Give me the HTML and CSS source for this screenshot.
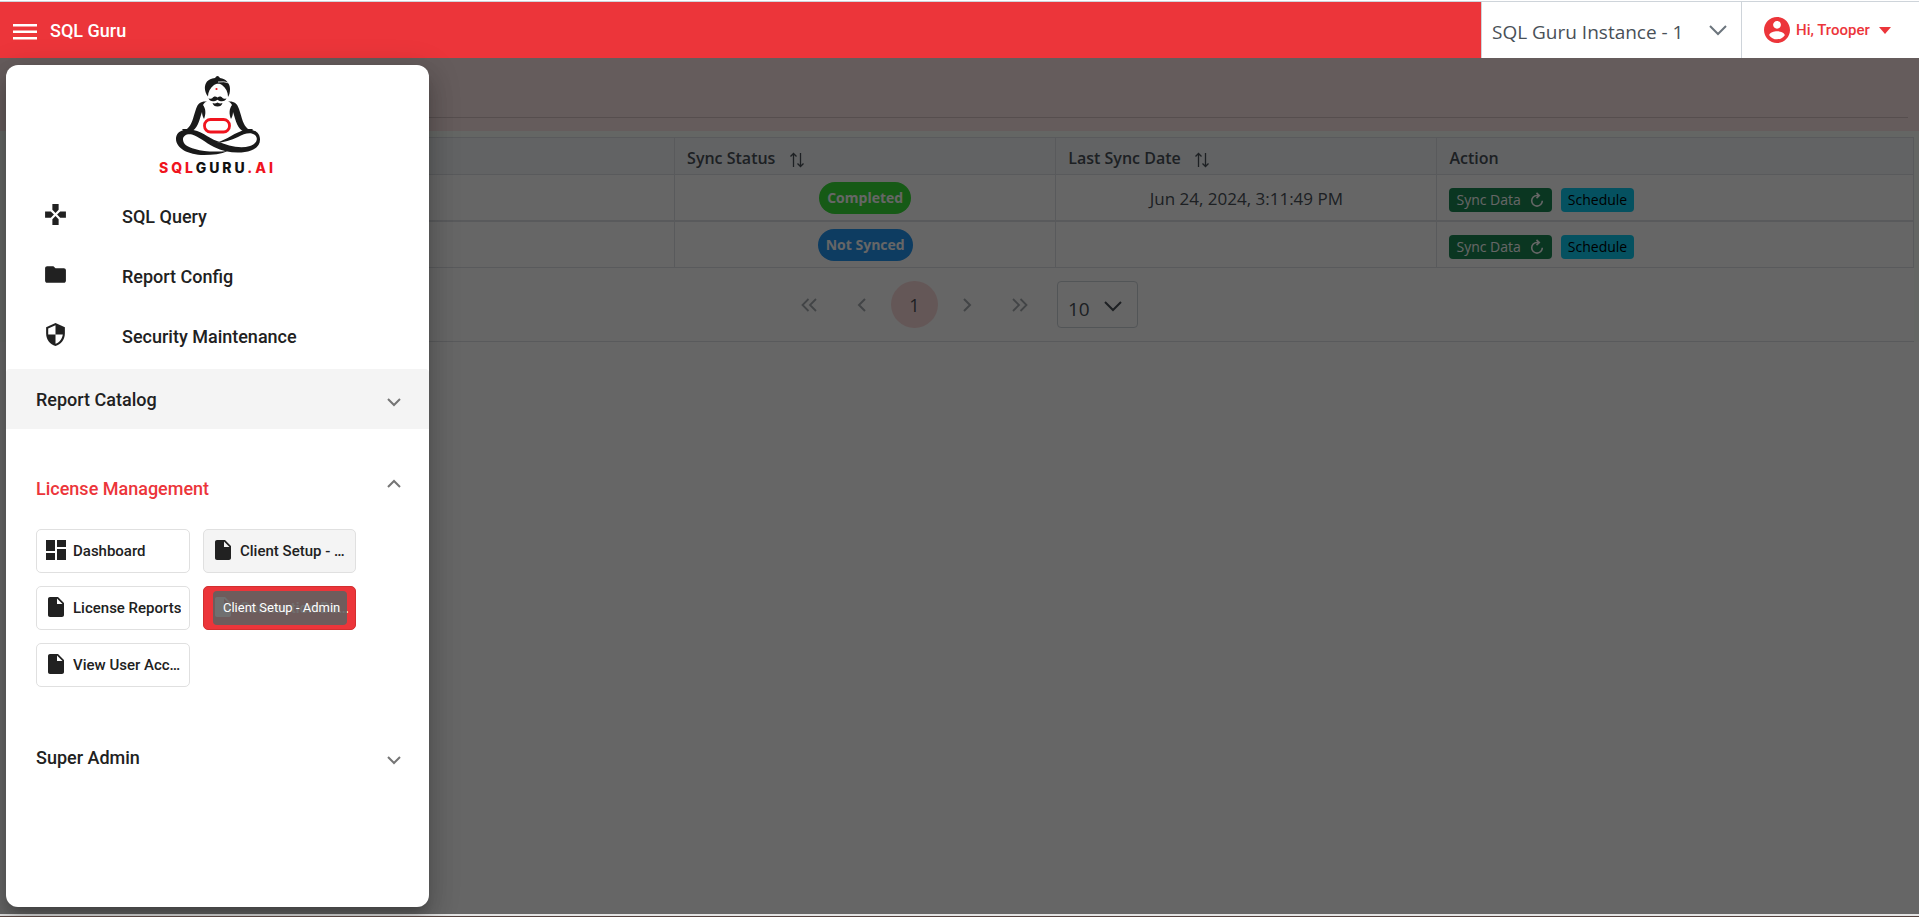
FILE: index.html
```html
<!DOCTYPE html>
<html lang="en">
<head>
  <meta charset="utf-8">
  <meta name="viewport" content="width=device-width, initial-scale=1">
  <title>SQL Guru</title>
  <link rel="stylesheet" href="styles.css">
</head>
<body>
  <!-- icons shared by several items -->
  <svg class="sprite" aria-hidden="true">
    <symbol id="i-file" viewBox="0 0 24 24"><path d="M6 2c-1.100 0-1.990.9-1.990 2L4 20c0 1.100.89 2 1.990 2H18c1.100 0 2-.9 2-2V8l-6-6H6zm7 7V3.500L18.500 9H13z"/></symbol>
    <symbol id="i-down" viewBox="0 0 14 14"><path d="M1 4l6 6 6-6" fill="none" stroke="currentColor" stroke-width="2"/></symbol>
    <symbol id="i-sort" viewBox="0 0 16 16"><path d="M4.500 15V1.500M1.500 4.500l3-3 3 3M11.500 1v13.500M8.500 11.500l3 3 3-3" fill="none" stroke="currentColor" stroke-width="1.300"/></symbol>
    <symbol id="i-sync" viewBox="0 0 16 16"><path d="M9.500 3.500H8a5.300 5.300 0 1 0 5.300 5.300M7.500.8l2.800 2.700-2.800 2.700" fill="none" stroke="currentColor" stroke-width="1.600"/></symbol>
    <symbol id="i-left" viewBox="0 0 16 16"><path d="M11 2L5 8l6 6" fill="none" stroke="currentColor" stroke-width="2"/></symbol>
    <symbol id="i-left2" viewBox="0 0 16 16"><path d="M7.500 2l-6 6 6 6M15 2L9 8l6 6" fill="none" stroke="currentColor" stroke-width="1.800"/></symbol>
  </svg>

  <header class="topbar">
    <button class="menu-btn" type="button" aria-label="Menu">
      <svg viewBox="0 0 24 16"><path d="M0 0h24v2.600H0zM0 6.500h24v2.600H0zM0 13h24v2.600H0z"/></svg>
    </button>
    <span class="brand">SQL Guru</span>
    <div class="instance">
      <select aria-label="Instance">
        <option>SQL Guru Instance - 1</option>
      </select>
      <svg viewBox="0 0 18 18"><path d="M1 5l8 8 8-8" fill="none" stroke="currentColor" stroke-width="2"/></svg>
    </div>
    <button class="user" type="button">
      <svg class="user-icon" viewBox="2 2 20 20"><path d="M12 2C6.480 2 2 6.480 2 12s4.480 10 10 10 10-4.480 10-10S17.520 2 12 2zm0 3c1.660 0 3 1.340 3 3s-1.340 3-3 3-3-1.340-3-3 1.340-3 3-3zm0 14.200c-2.500 0-4.710-1.280-6-3.220.03-1.990 4-3.080 6-3.080 1.990 0 5.970 1.090 6 3.080-1.290 1.940-3.500 3.220-6 3.220z"/></svg>
      <span>Hi, Trooper</span>
      <svg class="caret" viewBox="0 0 12 7"><path d="M0 0h12L6 7z"/></svg>
    </button>
  </header>

  <div class="stage">
    <main class="page">
      <div class="page-head"><hr></div>
      <div class="table-wrap">
        <table class="grid">
          <thead>
            <tr>
              <th class="col-name"></th>
              <th class="col-status">Sync Status <svg class="sort"><use href="#i-sort"/></svg></th>
              <th class="col-date">Last Sync Date <svg class="sort"><use href="#i-sort"/></svg></th>
              <th>Action</th>
            </tr>
          </thead>
          <tbody>
            <tr>
              <td></td>
              <td class="center"><span class="badge done">Completed</span></td>
              <td class="center date">Jun 24, 2024, 3:11:49 PM</td>
              <td>
                <div class="actions">
                  <button class="btn btn-sync" type="button">Sync Data <svg><use href="#i-sync"/></svg></button>
                  <button class="btn btn-plan" type="button">Schedule</button>
                </div>
              </td>
            </tr>
            <tr>
              <td></td>
              <td class="center"><span class="badge pending">Not Synced</span></td>
              <td class="center date"></td>
              <td>
                <div class="actions">
                  <button class="btn btn-sync" type="button">Sync Data <svg><use href="#i-sync"/></svg></button>
                  <button class="btn btn-plan" type="button">Schedule</button>
                </div>
              </td>
            </tr>
          </tbody>
        </table>
        <nav class="pager" aria-label="Pages">
          <button type="button" aria-label="First page"><svg><use href="#i-left2"/></svg></button>
          <button type="button" aria-label="Previous page"><svg><use href="#i-left"/></svg></button>
          <button type="button" class="current">1</button>
          <button type="button" class="flip" aria-label="Next page"><svg><use href="#i-left"/></svg></button>
          <button type="button" class="flip" aria-label="Last page"><svg><use href="#i-left2"/></svg></button>
          <div class="page-size">
            <select aria-label="Rows per page">
              <option>10</option>
            </select>
            <svg viewBox="0 0 18 18"><path d="M1 5l8 8 8-8" fill="none" stroke="currentColor" stroke-width="2"/></svg>
          </div>
        </nav>
      </div>
    </main>

    <div class="backdrop"></div>

    <aside class="drawer">
      <div class="logo">
        <svg viewBox="0 0 84 80" role="img" aria-label="SQLGuru.ai">
          <path fill="#1a1a1a" d="M39 3q2.500-4 5 0c6 1 10 5 10 11 0 3-.5 6-2 8 0-5-2-9-6-12-2-1.500-5-2-8 0-4 3-6 7-6 11.500-4-5-4-11-1-15 2-2 4-3 8-3.500z"/>
          <path stroke="#fff" stroke-width=".8" fill="none" d="M42 7q6-1 11 1"/>
          <circle cx="40.500" cy="14" r="1.100" fill="#f0141e"/>
          <path fill="#1a1a1a" d="M41.500 22.500c2-1.500 4-1 5 .5 1 1 2.500 1 4 .2-1 3-5 4.200-9 1.500-4.200 2.700-8 1.500-9-1.500 1.500.8 3 .8 4-.2 1-1.500 3-2 5-.5zM36.500 28q2.500 1 5-.5 2.500 1.500 5 .5-1 3.500-5 3.500t-5-3.500z"/>
          <path fill="#1a1a1a" d="M31 26.500c-6-.5-9 1.500-11 7.500-3 9-4 16-9 20l-5 0c2 3 5 4 8 3 8-3 9-11 12-20 0 3 1 5 2 7 2-5 2-10-1-14 1-2 2-3 4-3.500zM52 26.500c6-.5 9 1.500 11 7.500 3 9 4 16 9 20l5 0c-2 3-5 4-8 3-8-3-9-11-12-20 0 3-1 5-2 7-2-5-2-10 1-14-1-2-2-3-4-3.500z"/>
          <path fill="#1a1a1a" d="M8 55c-5 1-8 4-8 9 0 9 12 16 28 16 9 0 17-1 24-4-12 1-24 1-33-2-8-2-12-5-12-9.500 0-4 4-6 9-5 7 2 13 8 22 12.500 12 6 27 7 37 3.500 6-2 9-6 9-11s-3-8.500-8-9.500c-12-2-20 7-32 11.500l-4 1c8 0 15-2 22-5.500 6-3 12-5.500 17-2 4 4 1 9-5 11-10 3-22 0-33-5C31 63 23 52 8 55z"/>
          <rect x="28.500" y="44.500" width="25" height="12.500" rx="6" fill="none" stroke="#f0141e" stroke-width="2.800"/>
        </svg>
        <p class="logo-text"><span>SQL</span>GURU<span>.AI</span></p>
      </div>

      <nav class="links">
        <a href="#"><svg viewBox="0 0 24 24"><path d="M15 7.500V2H9v5.500l3 3 3-3zM7.500 9H2v6h5.500l3-3-3-3zM9 16.500V22h6v-5.500l-3-3-3 3zM16.500 9l-3 3 3 3H22V9h-5.500z"/></svg>SQL Query</a>
        <a href="#"><svg viewBox="0 0 24 24"><path d="M10 4H4c-1.100 0-1.990.9-1.990 2L2 18c0 1.100.9 2 2 2h16c1.100 0 2-.9 2-2V8c0-1.100-.9-2-2-2h-8l-2-2z"/></svg>Report Config</a>
        <a href="#"><svg viewBox="0 0 24 24"><path d="M12 1L3 5v6c0 5.550 3.840 10.740 9 12 5.160-1.260 9-6.450 9-12V5l-9-4zm0 10.990h7c-.53 4.120-3.280 7.790-7 8.940V12H5V6.300l7-3.110v8.800z"/></svg>Security Maintenance</a>
      </nav>

      <button class="section shaded" type="button">Report Catalog <svg><use href="#i-down"/></svg></button>

      <button class="section open" type="button">License Management <svg><use href="#i-down"/></svg></button>
      <div class="tiles">
        <a href="#" class="tile"><svg viewBox="0 0 24 24"><path d="M2 2h9v11H2zM2 15h9v7H2zM13 11h9v11h-9zM13 2h9v7h-9z"/></svg><span>Dashboard</span></a>
        <a href="#" class="tile hovered"><svg><use href="#i-file"/></svg><span>Client Setup - Admin</span></a>
        <a href="#" class="tile"><svg><use href="#i-file"/></svg><span>License Reports</span></a>
        <a href="#" class="tile active"><svg><use href="#i-file"/></svg><span>Connection Database</span><em class="tip" role="tooltip">Client Setup - Admin</em></a>
        <a href="#" class="tile"><svg><use href="#i-file"/></svg><span>View User Account</span></a>
      </div>

      <button class="section last" type="button">Super Admin <svg><use href="#i-down"/></svg></button>
    </aside>
  </div>
</body>
</html>
```

FILE: styles.css
```css
* {
  box-sizing: border-box;
}

body {
  margin: 0;
  height: 100vh;
  display: flex;
  flex-direction: column;
  font-family: Roboto, sans-serif;
  font-size: 18px;
  color: #212121;
  background: #fff;
  border-bottom: 1px solid #54433f;
}

button, select {
  font: inherit;
  color: inherit;
  border: 0;
  background: none;
  padding: 0;
  margin: 0;
}

a {
  color: inherit;
  text-decoration: none;
}

svg {
  fill: currentColor;
  flex: none;
}

.sprite {
  display: none;
}

/* top bar */
.topbar {
  display: flex;
  align-items: stretch;
  height: 58px;
  padding-top: 1px;
  color: #fff;
  background: #ec353a;
  background-clip: content-box;
}

.topbar > * {
  border-top: 1px solid #ced4da;
}

.menu-btn {
  display: flex;
  align-items: center;
  padding: 4px 13px 0;
}

.menu-btn svg {
  width: 24px;
  height: 16px;
}

.brand {
  flex: 1;
  line-height: 58px;
  font-weight: 500;
}

.instance {
  position: relative;
  width: 261px;
  background: #fff;
  color: #495057;
  border-left: 1px solid #ced4da;
  border-right: 1px solid #ced4da;
}

.instance select {
  appearance: none;
  width: 100%;
  height: 100%;
  padding: 4px 40px 0 10px;
  font-family: "Open Sans", sans-serif;
  font-size: 19px;
}

.instance svg {
  position: absolute;
  right: 14px;
  top: 19px;
  width: 18px;
  height: 18px;
  color: #6c757d;
  pointer-events: none;
}

.user {
  display: flex;
  align-items: center;
  gap: 6px;
  width: 177px;
  padding-left: 22px;
  background: #fff;
  color: #ec353a;
  font-size: 15px;
  font-weight: 500;
}

.user-icon {
  width: 26px;
  height: 26px;
}

.caret {
  width: 12px;
  height: 7px;
  margin-left: 3px;
}

/* dimmed page */
.stage {
  position: relative;
  flex: 1;
  display: flex;
  padding: 7px 6px 9px;
}

.page {
  position: absolute;
  inset: 0;
  background: #fff;
  font-family: "Open Sans", sans-serif;
  font-size: 16px;
  color: #495057;
  border-bottom: 2px solid #e4e4e4;
}

.page-head {
  height: 73px;
  padding: 59px 11px 0;
  background: #fde6e6;
}

.page-head hr {
  margin: 0;
  border: 0;
  border-top: 1px solid #d6c4c4;
}

.table-wrap {
  padding: 6px 5px 0 7px;
  background: #f9fffb;
}

.grid {
  width: 100%;
  table-layout: fixed;
  border-collapse: collapse;
  background: #fff;
}

.grid th {
  height: 37px;
  padding: 4px 12px 0;
  text-align: left;
  font-weight: 600;
  line-height: 24px;
  background: #f4f7fa;
  border: 1px solid #dee2e6;
}

.grid td {
  height: 47px;
  padding: 2px 12px 0;
  border: 1px solid #dee2e6;
}

.grid tbody tr:first-child td {
  height: 46px;
  border-bottom-width: 2px;
}

.col-name {
  width: 35%;
}

.col-status, .col-date {
  width: 20%;
}

.sort {
  width: 16px;
  height: 16px;
  margin-left: 9px;
  vertical-align: -4px;
}

.grid .center {
  text-align: center;
}

.grid .date {
  font-size: 17px;
}

.badge {
  display: inline-block;
  padding: 0 8px;
  border-radius: 16px;
  line-height: 32px;
  font-size: 14px;
  font-weight: 700;
  color: #fff;
}

.done {
  background: #38e037;
}

.pending {
  background: #2196f3;
}

.actions {
  display: flex;
  gap: 9px;
  padding-top: 3px;
}

.btn {
  display: flex;
  align-items: center;
  gap: 8px;
  height: 24px;
  padding: 0 7px;
  border-radius: 4px;
  font-size: 14px;
}

.btn svg {
  width: 16px;
  height: 16px;
}

.btn-sync {
  color: #fff;
  background: #198754;
}

.btn-plan {
  color: #000;
  background: #0dcaf0;
}

.pager {
  display: flex;
  align-items: center;
  justify-content: center;
  gap: 6px;
  height: 74px;
  padding-left: 2px;
  background: #fff;
  border-bottom: 1px solid #dee2e6;
  color: #6c757d;
}

.pager button {
  display: flex;
  align-items: center;
  justify-content: center;
  width: 47px;
  height: 47px;
  border-radius: 50%;
}

.pager button svg {
  width: 16px;
  height: 16px;
  opacity: .6;
}

.pager .flip {
  transform: scaleX(-1);
}

.pager .current {
  background: #fbdada;
  color: #495057;
  font-size: 18px;
}

.page-size {
  position: relative;
  width: 81px;
  height: 47px;
  margin-left: 7px;
  border: 1px solid #ced4da;
  border-radius: 4px;
  color: #495057;
}

.page-size select {
  appearance: none;
  width: 100%;
  height: 100%;
  padding: 8px 0 0 10px;
  font-size: 19px;
}

.page-size svg {
  position: absolute;
  right: 15px;
  top: 15px;
  width: 18px;
  height: 18px;
  pointer-events: none;
}

.backdrop {
  position: absolute;
  inset: 0 0 2px;
  background: rgba(0, 0, 0, .6);
}

/* side drawer */
.drawer {
  position: relative;
  width: 423px;
  padding-top: 10px;
  background: #fff;
  border-radius: 12px;
  box-shadow: 0 8px 10px -5px rgba(0, 0, 0, .2), 0 16px 24px 2px rgba(0, 0, 0, .14), 0 6px 30px 5px rgba(0, 0, 0, .12);
}

.logo {
  display: flex;
  flex-direction: column;
  align-items: center;
}

.logo svg {
  width: 84px;
  height: 80px;
}

.logo-text {
  margin: 4px 0 0;
  font-family: Inter, sans-serif;
  font-size: 14px;
  line-height: 18px;
  font-weight: 800;
  letter-spacing: 3px;
  color: #111;
}

.logo-text span {
  color: #f0141e;
}

.links {
  display: flex;
  flex-direction: column;
  padding: 9px 0 3px;
}

.links a {
  display: flex;
  align-items: center;
  gap: 54px;
  height: 60px;
  padding-left: 37px;
  font-weight: 500;
}

.links svg {
  width: 25px;
  height: 25px;
  margin-bottom: 3px;
}

.section {
  display: flex;
  align-items: center;
  justify-content: space-between;
  width: 100%;
  height: 60px;
  padding: 0 28px 0 30px;
  font-weight: 500;
}

.section svg {
  width: 14px;
  height: 14px;
  margin-top: 6px;
  color: #757575;
}

.shaded {
  background: #f4f4f4;
  border-radius: 4px 4px 0 0;
}

.open {
  margin-top: 29px;
  color: #ec353a;
}

.open svg {
  margin: 0 0 8px;
  transform: rotate(180deg);
}

.tiles {
  display: grid;
  grid-template-columns: 154px 153px;
  gap: 13px;
  padding: 11px 30px 0;
}

.tile {
  position: relative;
  display: flex;
  align-items: center;
  gap: 5px;
  height: 44px;
  padding: 0 3px 0 7px;
  border: 1px solid #e0e0e0;
  border-radius: 5px;
  font-size: 15px;
  font-weight: 500;
}

.tile > svg {
  width: 24px;
  height: 24px;
  margin-bottom: 3px;
}

.tile > span {
  overflow: hidden;
  text-overflow: ellipsis;
  white-space: nowrap;
}

.hovered {
  background: #f4f4f4;
}

.active {
  color: #fff;
  background: #ec353a;
  border-color: #d32f2f;
}

.tip {
  position: absolute;
  left: 9px;
  top: 4px;
  padding: 0 7px 0 10px;
  border-radius: 4px;
  line-height: 34px;
  font-size: 13px;
  font-weight: 400;
  font-style: normal;
  white-space: nowrap;
  color: #fff;
  background: rgba(97, 97, 97, .9);
}

.last {
  margin-top: 40px;
}
```
